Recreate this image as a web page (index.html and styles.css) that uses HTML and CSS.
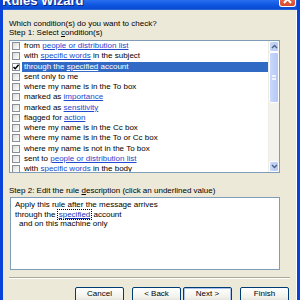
FILE: index.html
```html
<!DOCTYPE html>
<html lang="en">
<head>
   <meta charset="UTF-8">
   <link rel="stylesheet" href="styles.css">
   <title>Rules Wizard</title>
</head>
<body>
   <div class="window">
      <div class="titlebar">
         <span class="title">Rules Wizard</span>
         <span class="close">
            <svg width="11" height="8" viewBox="0 0 11 8"><path d="M2 6 L5.5 2 L9 6" stroke="#fff" stroke-width="2" fill="none"/></svg>
         </span>
      </div>
      <div class="content">
         <p class="question">Which condition(s) do you want to check?</p>
         <p class="step">Step 1: Select <u>c</u>ondition(s)</p>

         <div class="list">
            <ul class="items">
               <li><span class="check"></span><span class="label">from <a>people or distribution list</a></span></li>
               <li><span class="check"></span><span class="label">with <a>specific words</a> in the subject</span></li>
               <li class="selected"><span class="check checked"><svg width="6" height="6" viewBox="0 0 6 6"><path d="M0.5 3 L2.2 4.8 L5.6 0.8" stroke="#000" stroke-width="1.4" fill="none"/></svg></span><span class="label">through the <a>specified</a> account</span></li>
               <li><span class="check"></span><span class="label">sent only to me</span></li>
               <li><span class="check"></span><span class="label">where my name is in the To box</span></li>
               <li><span class="check"></span><span class="label">marked as <a>importance</a></span></li>
               <li><span class="check"></span><span class="label">marked as <a>sensitivity</a></span></li>
               <li><span class="check"></span><span class="label">flagged for <a>action</a></span></li>
               <li><span class="check"></span><span class="label">where my name is in the Cc box</span></li>
               <li><span class="check"></span><span class="label">where my name is in the To or Cc box</span></li>
               <li><span class="check"></span><span class="label">where my name is not in the To box</span></li>
               <li><span class="check"></span><span class="label">sent to <a>people or distribution list</a></span></li>
               <li><span class="check"></span><span class="label">with <a>specific words</a> in the body</span></li>
            </ul>
            <div class="scrollbar">
               <div class="sb-btn">
                  <svg width="7" height="5" viewBox="0 0 7 5"><path d="M1 4 L3.5 1.5 L6 4" stroke="#4d6185" stroke-width="1.4" fill="none"/></svg>
               </div>
               <div class="sb-thumb"><span class="grip"></span></div>
               <div class="sb-track"></div>
               <div class="sb-btn">
                  <svg width="7" height="5" viewBox="0 0 7 5"><path d="M1 1 L3.5 3.5 L6 1" stroke="#4d6185" stroke-width="1.4" fill="none"/></svg>
               </div>
            </div>
         </div>

         <p class="step step2">Step 2: Edit the rule <u>d</u>escription (click an underlined value)</p>
         <div class="desc">
            <p>Apply this rule after the message arrives</p>
            <p>through the <a class="focus">specified</a> account</p>
            <p class="indent">and on this machine only</p>
         </div>

         <div class="separator"></div>

         <div class="buttons">
            <button class="btn">Cancel</button>
            <div class="pair">
               <button class="btn">&lt; Back</button>
               <button class="btn default">Next &gt;</button>
            </div>
            <button class="btn">Finish</button>
         </div>
      </div>
   </div>
</body>
</html>
```

FILE: styles.css
```css
* {
   padding: 0;
   margin: 0;
   box-sizing: border-box;
}

body {
   width: 300px;
   height: 300px;
   overflow: hidden;
   font-family: "Liberation Sans", Arial, sans-serif;
   font-size: 8px;
   color: #000;
   background: #0831d9;
}

.window {
   width: 300px;
   height: 300px;
   display: flex;
   flex-direction: column;
   border-left: 3px solid #0842d8;
   border-right: 3px solid #0842d8;
}

.titlebar {
   height: 10px;
   flex: none;
   display: flex;
   justify-content: space-between;
   align-items: flex-end;
   background: linear-gradient(#2a6ef0, #0d55e0 60%, #0a4bd0);
   overflow: hidden;
   border-bottom: 1px solid #2a63d8;
}

.title {
   color: #fff;
   font-weight: bold;
   font-size: 13px;
   line-height: 13px;
   margin-bottom: 2px;
   margin-left: -1px;
   text-shadow: 1px 1px 0 #0a1f7a;
}

.close {
   width: 17px;
   height: 10px;
   margin-right: 1px;
   margin-bottom: 2px;
   display: flex;
   align-items: flex-end;
   justify-content: center;
   padding-bottom: 1px;
   background: linear-gradient(#e8745a, #d8482a);
   border: 1px solid #fff;
   border-top: none;
   border-radius: 0 0 3px 3px;
}

.content {
   flex: 1;
   background: #ece9d8;
   border-right: 1px solid #fff;
   padding: 9px 6px 0 6px;
}

.question {
   line-height: 10px;
}

.step {
   line-height: 10px;
   margin-top: -1px;
}

.list {
   margin-top: 2px;
   width: 271px;
   height: 133px;
   border: 1px solid #7f9db9;
   background: #fff;
   display: flex;
}

.items {
   list-style: none;
   flex: 1;
   overflow: hidden;
}

.items li {
   height: 10.25px;
   display: flex;
   align-items: center;
   padding-left: 2px;
}

.check {
   width: 8px;
   height: 8px;
   flex: none;
   display: flex;
   align-items: center;
   justify-content: center;
   border: 1px solid #8a8f99;
   background: linear-gradient(135deg, #dcdcd5, #fff);
}

.check.checked {
   background: #fff;
}

.label {
   margin-left: 2px;
   padding-left: 2px;
   flex: 1;
   height: 10.25px;
   line-height: 10.25px;
   white-space: nowrap;
}

.items a {
   color: #2248d0;
   text-decoration: underline;
}

.selected .label {
   background: #316ac5;
   color: #fff;
}

.selected .label a {
   color: #fff;
}

.scrollbar {
   width: 11px;
   flex: none;
   display: flex;
   flex-direction: column;
   background: #f3f1ec;
   border-left: 1px solid #eeede5;
}

.sb-btn {
   height: 11px;
   flex: none;
   display: flex;
   align-items: center;
   justify-content: center;
   background: linear-gradient(90deg, #c8d6f7, #b9cbf3);
   border: 1px solid #fff;
   border-radius: 2px;
}

.sb-thumb {
   height: 51px;
   flex: none;
   display: flex;
   align-items: center;
   justify-content: center;
   background: linear-gradient(90deg, #c9d8fc, #b4c8f6);
   border: 1px solid #fff;
   border-radius: 2px;
}

.grip {
   width: 4px;
   height: 5px;
   border-top: 1px solid #eef3fe;
   border-bottom: 1px solid #eef3fe;
   background: linear-gradient(#eef3fe 0 1px, transparent 1px 2px, #eef3fe 2px 3px, transparent 3px);
}

.sb-track {
   flex: 1;
}

.step2 {
   margin-top: 13px;
}

.desc {
   margin-top: 1px;
   margin-left: 1px;
   width: 270px;
   height: 73px;
   border: 1px solid #7f9db9;
   background: #fff;
   padding: 2px 4px;
}

.desc p {
   line-height: 9.7px;
   white-space: nowrap;
}

.desc .indent {
   padding-left: 4px;
}

.desc a {
   color: #1a35b8;
   text-decoration: underline;
   outline: 1px dotted #000;
   padding: 0 1px;
}

.separator {
   margin-top: 7px;
   width: 281px;
   border-top: 1px solid #aca899;
   border-bottom: 1px solid #fff;
}

.buttons {
   margin-top: 8px;
   margin-left: 66px;
   display: flex;
   gap: 8px;
}

.pair {
   display: flex;
   gap: 2px;
}

.btn {
   width: 49px;
   height: 15px;
   font-family: "Liberation Sans", Arial, sans-serif;
   font-size: 8px;
   color: #000;
   background: linear-gradient(#fff, #f2f1ea 70%, #e3e2da);
   border: 1px solid #003c74;
   border-radius: 2px;
   padding-bottom: 2px;
}

.btn.default {
   box-shadow: inset 0 0 0 1px #a9c2f0;
}
```
